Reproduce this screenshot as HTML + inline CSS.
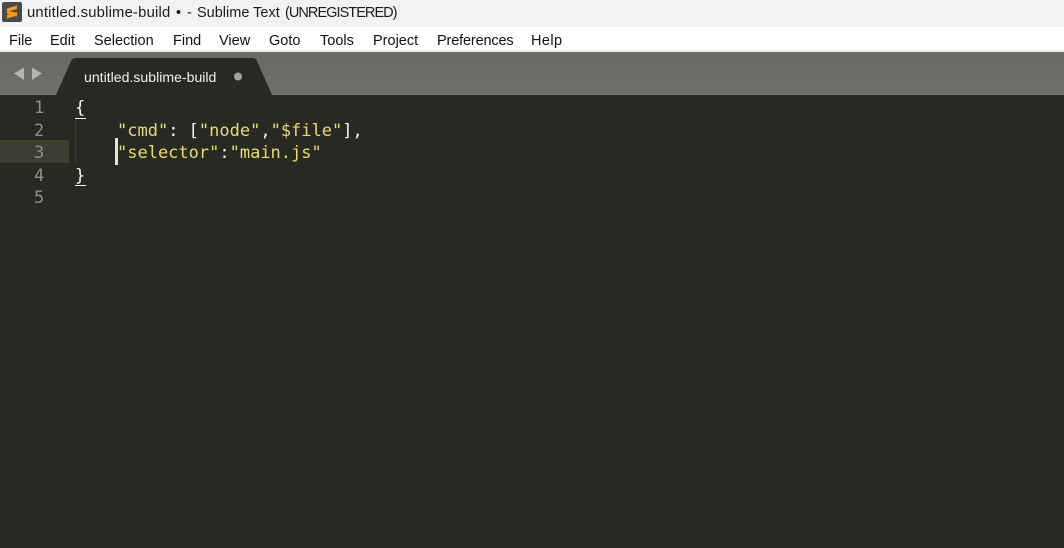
<!DOCTYPE html>
<html><head><meta charset="utf-8">
<style>
html,body{margin:0;padding:0;width:1064px;height:548px;overflow:hidden;background:#282923}
body{position:relative;font-family:"Liberation Sans",sans-serif}
.a{position:absolute;white-space:pre}
#title{left:0;top:0;width:1064px;height:27px;background:#f1f2f4}
#menu{left:0;top:27px;width:1064px;height:24px;background:#fff}
#sep{left:0;top:50px;width:1064px;height:2px;background:#e8e8e8}
#tabs{left:0;top:52px;width:1064px;height:43px;background:linear-gradient(#6a6a64,#70706a)}
.t{font-size:14.5px;color:#1c1c1c;line-height:20px;top:3px}
.m{font-size:14.5px;color:#111;line-height:20px;top:30.500px}
.code{font-family:"DejaVu Sans Mono",monospace;font-size:17px;line-height:22px;color:#e6db74}
.w{color:#f8f8f2}
.n{font-family:"DejaVu Sans Mono",monospace;font-size:17px;line-height:22px;color:#8f908a;left:34px}
.u{height:1px;background:#f8f8f2;left:75px;width:11px}
</style></head><body>
<div class="a" id="title"></div>
<svg class="a" style="left:2px;top:2px" width="20" height="20" viewBox="0 0 20 20"><rect width="20" height="20" rx="2" fill="#4b4b49"/><path d="M5 6.500 L15 3.500 V7 L5 10Z M5 8.500 L15 11 V14.500 L5 11.500Z M5 13 L15 10 V13.500 L5 16.500Z" fill="#f59a1c"/></svg>
<div class="a t" style="left:27px;letter-spacing:.2px;font-size:14.800px">untitled.sublime-build</div>
<div class="a t" style="left:176px">•</div>
<div class="a t" style="left:187px">-</div>
<div class="a t" style="left:197px">Sublime Text</div>
<div class="a t" style="left:285px;font-size:14.500px;letter-spacing:-.95px">(UNREGISTERED)</div>
<div class="a" id="menu"></div>
<div class="a m" style="left:9px">File</div>
<div class="a m" style="left:50px">Edit</div>
<div class="a m" style="left:94px">Selection</div>
<div class="a m" style="left:173px">Find</div>
<div class="a m" style="left:219px">View</div>
<div class="a m" style="left:269px">Goto</div>
<div class="a m" style="left:320px">Tools</div>
<div class="a m" style="left:373px">Project</div>
<div class="a m" style="left:437px;letter-spacing:-.15px">Preferences</div>
<div class="a m" style="left:531px;letter-spacing:.4px">Help</div>
<div class="a" id="sep"></div>
<div class="a" id="tabs"></div>
<svg class="a" style="left:0;top:52px" width="300" height="43" viewBox="0 0 300 43">
<path d="M14 21.500 L24 15.500 V28Z" fill="#b4b4af"/><path d="M32 15.500 L42 21.500 L32 28Z" fill="#b4b4af"/>
<path d="M56 43 L71 9 Q72.500 6 76 6 H252 Q255.500 6 257 9 L272 43Z" fill="#282923"/>
<circle cx="238" cy="24.500" r="4" fill="#a0a09c"/>
</svg>
<div class="a" style="left:84px;top:67.500px;font-size:14.100px;line-height:18px;color:#f2f2ee">untitled.sublime-build</div>
<div class="a" style="left:0;top:140px;width:69px;height:23px;background:#3e3d32"></div>
<div class="a" style="left:75px;top:120px;width:0;height:43px;border-left:1px dotted #4d4e47"></div>
<div class="a n" style="top:97px">1</div>
<div class="a n" style="top:120px">2</div>
<div class="a n" style="top:142px">3</div>
<div class="a n" style="top:165px">4</div>
<div class="a n" style="top:187px">5</div>
<div class="a code w" style="left:75px;top:97px">{</div>
<div class="a u" style="top:118px"></div>
<div class="a code" style="left:117px;top:120px">"cmd"<span class="w">: [</span>"node"<span class="w">,</span>"$file"<span class="w">],</span></div>
<div class="a" style="left:115px;top:138px;width:3px;height:27px;background:#e4e4dc"></div>
<div class="a code" style="left:117px;top:142px">"selector"<span class="w">:</span>"main.js"</div>
<div class="a code w" style="left:75px;top:165px">}</div>
<div class="a u" style="top:185px"></div>
</body></html>
